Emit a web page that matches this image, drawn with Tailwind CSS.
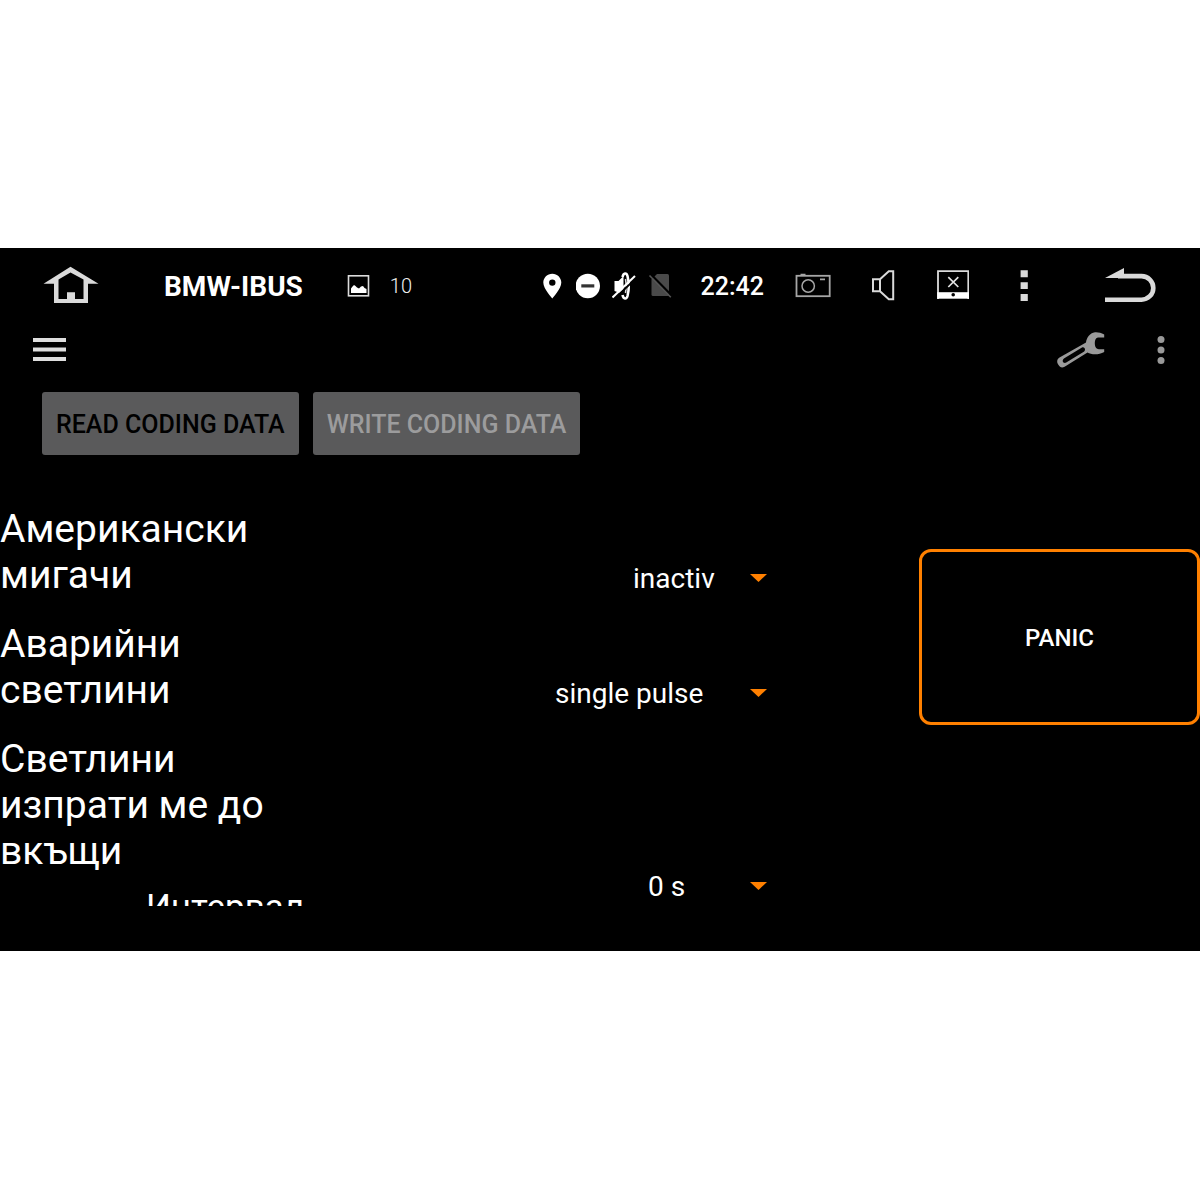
<!DOCTYPE html>
<html lang="bg">
<head>
    <meta charset="UTF-8">
    <meta name="viewport" content="width=device-width, initial-scale=1.0">
    <title>BMW-IBUS - Coding</title>
    <script src="https://cdn.jsdelivr.net/npm/@tailwindcss/browser@4"></script>
</head>
<body class="bg-white py-62 font-[Roboto,sans-serif]">

<div class="bg-black text-white pb-[45px]">

    <!-- Status bar -->
    <header class="flex items-center justify-between h-19 pl-[43px] pr-11">
        <div class="flex items-center">
            <button aria-label="Home" class="text-[#dadada]">
                <svg class="block w-14 h-10" viewBox="0 0 56 40" fill="currentColor" fill-rule="evenodd">
                    <path d="M0.5 17.7L27.5 0.7L55.5 17.7H45V37H11V17.7ZM15.5 33V13.5L27.5 6.5L40.5 13.5V33H32V26.3H24V33Z"/>
                </svg>
            </button>
            <h1 class="ml-[65px] pt-0.5 text-[28px] leading-8 font-bold">BMW-IBUS</h1>
            <svg class="ml-11 w-6 h-6" viewBox="0 0 24 24" fill="none">
                <rect x="1.5" y="1.8" width="20" height="20" stroke="#dcdcdc" stroke-width="1.6"/>
                <path d="M4 19V14.5L5.5 12.5L7 11L8.5 12L10 13.5L12 14.5L14 12.5L16 12L17.5 14L19.5 15V19Z" fill="#fff"/>
            </svg>
            <span class="ml-[19px] text-xl leading-6 font-light text-[#f0f0f0]">10</span>
        </div>

        <div class="flex items-center">
            <div class="flex items-center gap-3">
                <svg class="w-6 h-7" viewBox="0 0 24 28" fill="#fff">
                    <path fill-rule="evenodd" d="M12.3 1.7C7.3 1.7 3.3 5.7 3.3 10.6C3.3 17 12.3 26.4 12.3 26.4S21.3 17 21.3 10.6C21.3 5.7 17.3 1.7 12.3 1.7ZM12.3 13.8A3.2 3.2 0 1 1 12.3 7.4A3.2 3.2 0 0 1 12.3 13.8Z"/>
                </svg>
                <svg class="w-6 h-7" viewBox="0 0 24 28">
                    <circle cx="11.8" cy="14" r="12.2" fill="#fff"/>
                    <rect x="5.3" y="12.3" width="13" height="3.2" fill="#333"/>
                </svg>
                <svg class="w-6 h-7" viewBox="0 0 24 28" fill="none">
                    <path d="M2.5 9H6.5L11.5 4V19L8 21L2.5 19Z" fill="#fff"/>
                    <path d="M10.5 5C11.5 0.5 14.5 0.5 15.5 4C17 10 17 18 15.5 24C14.5 27.5 11.5 27.5 10.5 23" stroke="#fff" stroke-width="2.6"/>
                    <path d="M13.5 7C14.5 11 14.5 17 13.5 21" stroke="#ddd" stroke-width="1.6"/>
                    <path d="M1.5 27.5L24.5 6" stroke="#000" stroke-width="2"/>
                    <path d="M0.5 25.5L23 4" stroke="#fff" stroke-width="2"/>
                </svg>
                <svg class="w-6 h-7" viewBox="0 0 24 28" fill="none">
                    <path d="M9 2H19.5Q21 2 21 3.5V22.5Q21 24 19.5 24H5Q3.5 24 3.5 22.5V7.5Z" fill="#4a4a4a"/>
                    <path d="M3 2.5L24 24" stroke="#000" stroke-width="2.4"/>
                    <path d="M1.5 3.5L22.8 25.3" stroke="#555" stroke-width="1.6"/>
                </svg>
            </div>
            <time class="ml-[29px] pt-0.5 text-[25px] leading-8 font-medium">22:42</time>
            <button aria-label="Screenshot" class="ml-[31px]">
                <svg class="block w-9 h-7" viewBox="0 0 36 28" fill="none" stroke="#a6a6a6">
                    <rect x="1.5" y="3.8" width="33.2" height="20.4" stroke-width="1.8"/>
                    <circle cx="13.2" cy="14" r="6.2" stroke-width="1.5"/>
                    <path d="M5.5 2.6H10.5M25 7.3H30" stroke-width="1.8"/>
                </svg>
            </button>
            <button aria-label="Volume" class="ml-10 text-[#dadada]">
                <svg class="block w-6 h-8" viewBox="0 0 24 32" fill="none" stroke="currentColor" stroke-width="2">
                    <path d="M2 9.2H9V21.2H2ZM9 9.2L17.8 1.2H22.2V29.2H17.8L9 21.2"/>
                </svg>
            </button>
            <button aria-label="Turn screen off" class="ml-[42px]">
                <svg class="block w-8 h-8" viewBox="0 0 32 32" fill="none">
                    <path d="M1 29V1.2H31.3V29" stroke="#dcdcdc" stroke-width="1.8"/>
                    <path d="M0.2 22.2H32V28.7H0.2Z" fill="#fff"/>
                    <circle cx="16.2" cy="24.8" r="1.8" fill="#000"/>
                    <path d="M11.3 7.2L21.3 17M21.3 7.2L11.3 17" stroke="#e4e4e4" stroke-width="1.7"/>
                </svg>
            </button>
            <button aria-label="More" class="ml-[51px] text-[#dadada]">
                <svg class="block w-2 h-8" viewBox="0 0 8 32" fill="currentColor">
                    <path d="M0.6 0.3H7.8V7.2H0.6ZM0.6 12.2H7.8V19H0.6ZM0.6 24H7.8V31H0.6Z"/>
                </svg>
            </button>
            <button aria-label="Back" class="ml-[76px] text-[#dadada]">
                <svg class="block w-13 h-9" viewBox="0 0 52 36" fill="none">
                    <path d="M1 10L20 0V6H20V10Z" fill="currentColor"/>
                    <path d="M14 8.1H37.5A11.8 11.8 0 0 1 37.5 31.7H1" stroke="currentColor" stroke-width="4.6"/>
                </svg>
            </button>
        </div>
    </header>

    <!-- Toolbar -->
    <nav class="flex items-center justify-between h-13 pl-[33px] pr-[35px]">
        <button aria-label="Menu">
            <svg class="block w-[33px] h-6" viewBox="0 0 33 24" stroke="#dedede" stroke-width="3.8">
                <path d="M0 2H33M0 11.5H33M0 21H33"/>
            </svg>
        </button>
        <div class="flex items-center gap-13">
            <button aria-label="Tools">
                <svg class="block w-[49px] h-10" viewBox="0 0 49 40" fill="#999" fill-rule="evenodd">
                    <path d="M48.2 4.6C45 2.6 42 2 39 2.2C33.5 3 30.5 8 30 12.5L26.5 14.5L3.5 27.5C0.8 29.3 0.7 32 2.2 34.6C3.9 37.6 6 38.2 8.6 36.8L31.5 22.5C35 24.5 42 25.5 48.2 22V19.2H43C39.5 19 38.8 16 38.8 12.8C38.8 10 39.8 7.5 42 7.4H48.2ZM8.3 28.2L26 17.6C28.5 16.3 30 20 28.2 21.4L10.2 32.6C7.2 34 5.2 30.3 8.3 28.2Z"/>
                </svg>
            </button>
            <button aria-label="More options">
                <svg class="block w-2 h-8" viewBox="0 0 8 32" fill="#999">
                    <circle cx="4" cy="5.5" r="3.5"/>
                    <circle cx="4" cy="16" r="3.5"/>
                    <circle cx="4" cy="26.5" r="3.5"/>
                </svg>
            </button>
        </div>
    </nav>

    <main class="flex">
        <div class="flex-1">
            <div class="flex gap-[14px] pt-4 pl-[42px]">
                <button class="h-[63px] px-[14px] pt-0.5 rounded-[3px] bg-[#5a5a5b] text-[25px] leading-8 font-medium text-black">READ CODING DATA</button>
                <button class="h-[63px] px-[14px] pt-0.5 rounded-[3px] bg-[#5a5a5b] text-[25px] leading-8 font-medium text-[#9c9c9d]" disabled>WRITE CODING DATA</button>
            </div>

            <!-- Settings list, the last row runs past the bottom edge -->
            <form class="flex flex-col gap-[21px] mt-[51px] h-[400px] w-[779px] overflow-hidden text-[39px] leading-[46px]">
                <div class="flex items-end justify-between h-[94px] shrink-0">
                    <label for="flashers" class="w-[304px] self-start">Американски мигачи</label>
                    <div class="relative">
                        <select id="flashers" class="block h-[46px] pt-[3px] pr-16 appearance-none bg-black text-[28px] leading-8">
                            <option>inactiv</option>
                        </select>
                        <svg class="absolute right-3 top-5 w-[17px] h-2 pointer-events-none" viewBox="0 0 17 8" fill="#ff8000"><path d="M0 0H17L8.5 8Z"/></svg>
                    </div>
                </div>
                <div class="flex items-end justify-between h-[94px] shrink-0">
                    <label for="hazard" class="w-[304px] self-start">Аварийни светлини</label>
                    <div class="relative">
                        <select id="hazard" class="block h-[46px] pt-[3px] pr-[75px] appearance-none bg-black text-[28px] leading-8">
                            <option>single pulse</option>
                        </select>
                        <svg class="absolute right-3 top-5 w-[17px] h-2 pointer-events-none" viewBox="0 0 17 8" fill="#ff8000"><path d="M0 0H17L8.5 8Z"/></svg>
                    </div>
                </div>
                <div class="flex items-end justify-between h-[172px] shrink-0">
                    <div class="w-[304px] self-start">
                        <label for="home-lights" class="block">Светлини изпрати ме до вкъщи</label>
                        <p class="mt-[11px] text-right text-[35px] leading-[46px]">Интервал</p>
                    </div>
                    <div class="relative">
                        <select id="home-lights" class="block h-[46px] pt-[3px] pr-[93px] appearance-none bg-black text-[28px] leading-8">
                            <option>0 s</option>
                        </select>
                        <svg class="absolute right-3 top-5 w-[17px] h-2 pointer-events-none" viewBox="0 0 17 8" fill="#ff8000"><path d="M0 0H17L8.5 8Z"/></svg>
                    </div>
                </div>
            </form>
        </div>

        <aside class="w-[281px] pt-[173px]">
            <button class="block w-full h-44 pt-0.5 rounded-xl border-3 border-[#ff8000] text-2xl font-medium">PANIC</button>
        </aside>
    </main>
</div>

</body>
</html>
